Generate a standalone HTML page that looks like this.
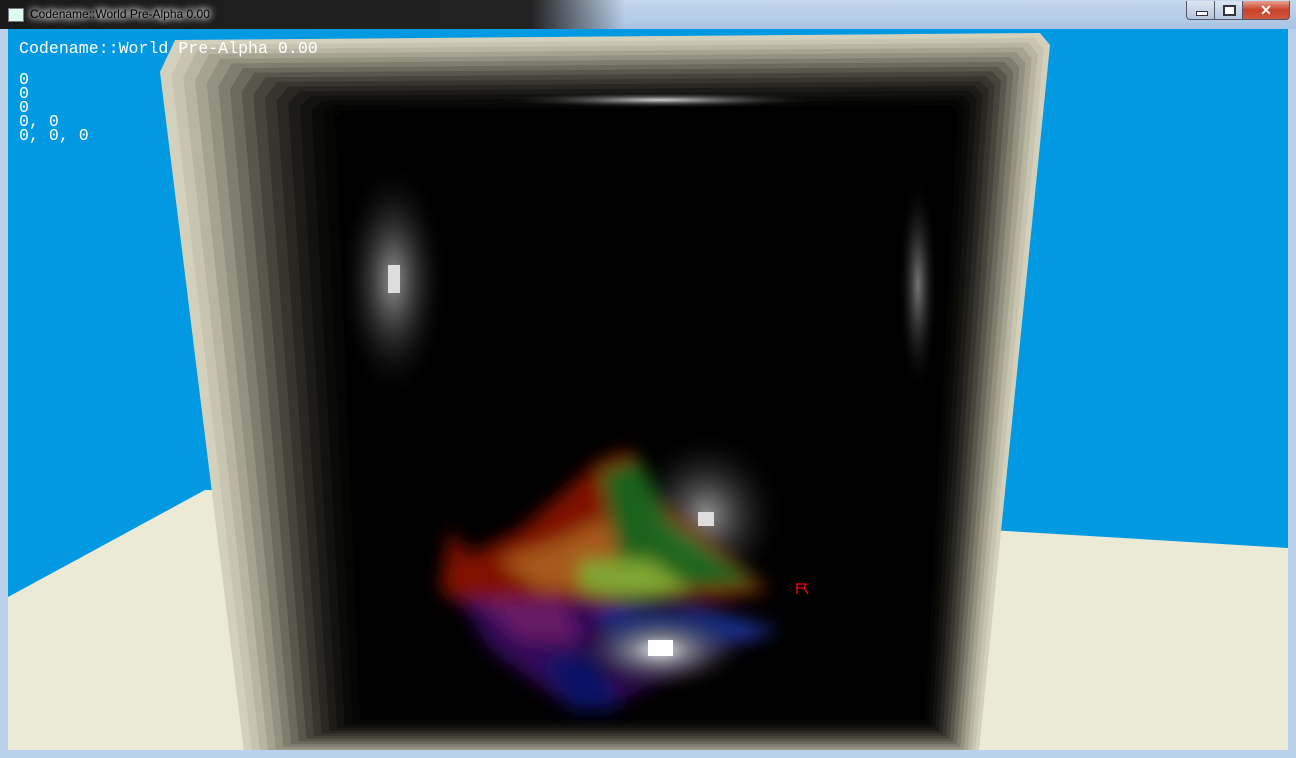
<!DOCTYPE html>
<html><head><style>
html,body{margin:0;padding:0;width:1296px;height:758px;overflow:hidden;background:#b9d1ea}
.tb{position:absolute;left:0;top:0;width:1296px;height:29px;background:linear-gradient(#c4d8ee,#a9c4e2)}
.tbd{position:absolute;left:0;top:0;width:625px;height:29px;background:linear-gradient(90deg,#1a1a1a 0,#222 85%,rgba(40,40,40,0) 100%)}
.title{position:absolute;left:30px;top:7px;font:12px "Liberation Sans",sans-serif;color:#000;text-shadow:0 0 6px #fff,0 0 8px #fff,0 0 10px #fff}
.ic{position:absolute;left:8px;top:8px;width:14px;height:12px;background:#dfe;border:1px solid #778}
.btn{position:absolute;top:1px;height:18px;border:1px solid #556;border-top:none}
.client{position:absolute;left:8px;top:29px;width:1280px;height:721px;background:#0099e2;overflow:hidden}
.hud{position:absolute;left:11px;font:16.6px "Liberation Mono",monospace;color:#fff;line-height:14px;white-space:pre}
</style></head><body>
<div class="tb"></div><div class="tbd"></div>
<div class="ic"></div>
<div class="title">Codename::World Pre-Alpha 0.00</div>
<div class="btn" style="left:1186px;width:27px;background:linear-gradient(#dce6f2,#b4c6dc);border-radius:0 0 0 4px"><div style="position:absolute;left:9px;top:10px;width:10px;height:3px;background:#fff;border:1px solid #334"></div></div>
<div class="btn" style="left:1214px;width:27px;background:linear-gradient(#dce6f2,#b4c6dc)"><div style="position:absolute;left:8px;top:4px;width:9px;height:7px;border:2px solid #334;background:#fff"></div></div>
<div class="btn" style="left:1242px;width:46px;background:linear-gradient(#e8a090,#c8402a 50%,#d05a40);border-radius:0 0 4px 0;color:#fff;font:bold 14px 'Liberation Sans',sans-serif;text-align:center;line-height:18px">✕</div>
<div class="client">
<svg id="s" width="1280" height="721" viewBox="8 29 1280 721" style="position:absolute;left:0;top:0">
<defs>
<filter id="b2" x="-50%" y="-50%" width="200%" height="200%"><feGaussianBlur stdDeviation="9"/></filter>
<radialGradient id="w"><stop offset="0" stop-color="#fff"/><stop offset=".3" stop-color="#888"/><stop offset="1" stop-color="#000" stop-opacity="0"/></radialGradient>
</defs>
<polygon points="8,597 205,490 255,490 260,750 8,750" fill="#ebead5"/>
<polygon points="990,530 1288,548 1288,750 970,750" fill="#ebead5"/>
<g id="rings"></g>
<g id="fx">
<ellipse cx="660" cy="100" rx="170" ry="8" fill="url(#w)" opacity=".8"/>
<ellipse cx="393" cy="280" rx="55" ry="120" fill="url(#w)" opacity=".55"/>
<rect x="388" y="265" width="12" height="28" fill="#ddd"/>
<ellipse cx="918" cy="285" rx="20" ry="110" fill="url(#w)" opacity=".45"/>
<ellipse cx="706" cy="515" rx="80" ry="85" fill="url(#w)" opacity=".55"/>
<g filter="url(#b2)" opacity=".8">
<polygon points="450,530 470,555 520,530 600,460 630,450 660,500 770,590 720,600 640,600 560,610 470,610 440,590" fill="#a01800"/>
<polygon points="500,560 560,540 600,520 640,540 700,580 620,590 540,590" fill="#d07020"/>
<polygon points="600,470 640,460 670,520 760,585 680,590 620,570" fill="#207a20"/>
<polygon points="580,560 650,560 690,590 640,600 580,590" fill="#a0d040"/>
<polygon points="460,600 560,600 660,610 780,630 720,650 620,700 560,700 490,650" fill="#401070"/>
<polygon points="600,610 700,610 780,630 700,650 620,660" fill="#2040c0"/>
<polygon points="480,600 560,600 580,640 520,640" fill="#802080"/>
<polygon points="540,660 600,650 620,710 570,710" fill="#101880"/>
</g>
<ellipse cx="660" cy="650" rx="90" ry="45" fill="url(#w)" opacity=".85"/>
<rect x="648" y="640" width="25" height="16" fill="#fff"/>
<rect x="698" y="512" width="16" height="14" fill="#ddd"/>
<path d="M796 584h10l-2 4l4 6M797 584v10M797 588h8" stroke="#f00" fill="none" stroke-width="1.3"/>
</g>
</svg>
<div class="hud" style="top:13px">Codename::World Pre-Alpha 0.00</div>
<div class="hud" style="top:44px">0
0
0
0, 0
0, 0, 0</div>
</div>
<script>
var O=[[160,72],[175,40],[1040,33],[1050,45],[978,760],[245,760]];
var I=[[335,115],[345,110],[950,105],[958,112],[925,720],[360,720]];
var cols=["#d3d1bc","#c7c5b0","#b8b6a2","#a6a491","#93917f","#7f7d6d","#6b6a5c","#58574c","#46453c","#36352e","#282722","#1c1b17","#12120f","#0a0a08","#050504"];
var g=document.getElementById('rings'),n=cols.length,h='';
for(var i=0;i<n;i++){var t=i/n;var p=O.map(function(o,k){return (o[0]+(I[k][0]-o[0])*t)+','+(o[1]+(I[k][1]-o[1])*t)}).join(' ');
h+='<polygon points="'+p+'" fill="'+cols[i]+'"/>';}
h+='<polygon points="'+I.map(function(a){return a.join(',')}).join(' ')+'" fill="#000"/>';
g.innerHTML=h;
</script>
</body></html>
